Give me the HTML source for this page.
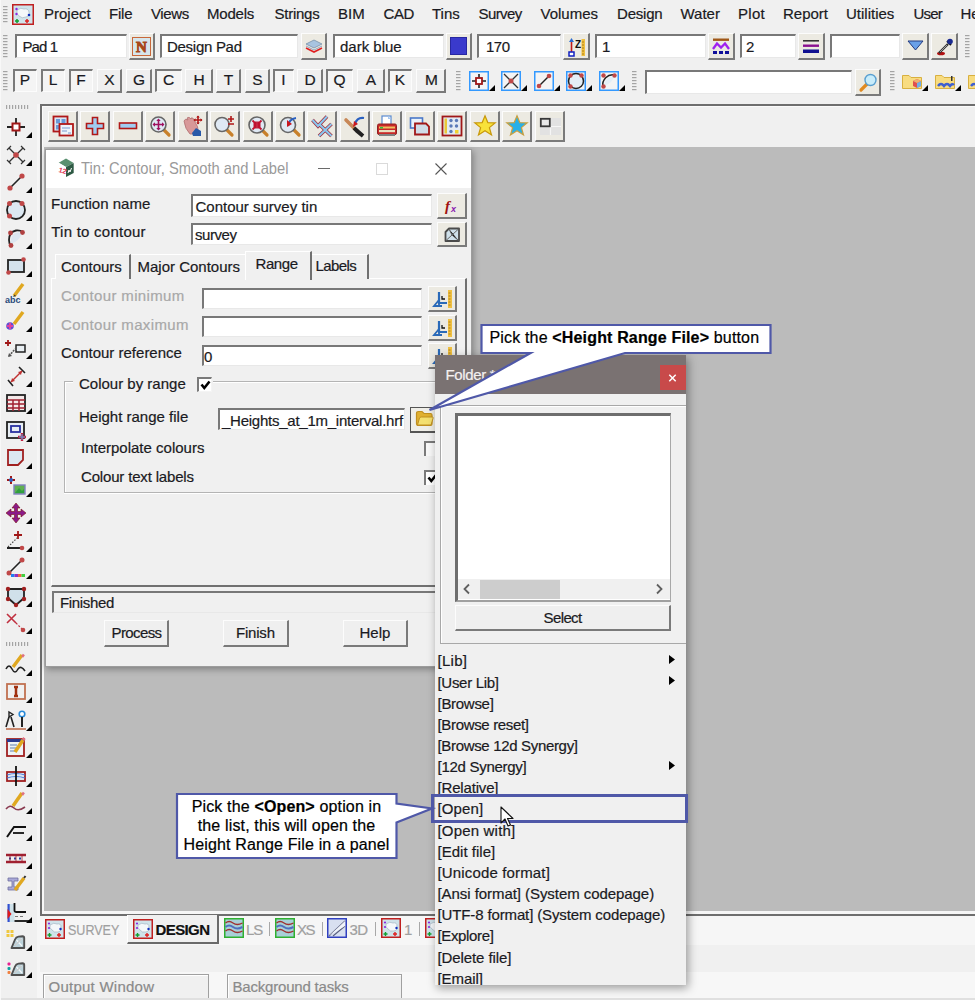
<!DOCTYPE html><html><head><meta charset="utf-8"><style>
html,body{margin:0;padding:0;}
body{width:975px;height:1000px;overflow:hidden;position:relative;background:#f0f0f0;font-family:"Liberation Sans",sans-serif;}
.t{position:absolute;white-space:nowrap;line-height:1;-webkit-text-stroke:0.2px currentColor;}
.b{position:absolute;}
svg.b{overflow:visible}
</style></head><body>
<div class="b" style="left:40px;top:104px;width:935px;height:812px;background:#6e6e6e"></div>
<div class="b" style="left:42px;top:106px;width:933px;height:807.5px;background:#f6f6f6"></div>
<div class="b" style="left:43.5px;top:107px;width:931.5px;height:804px;background:#bbbbbb"></div>
<div class="b" style="left:42px;top:106px;width:933px;height:41px;background:#f0f0f0;border-top:1px solid #fafafa;border-left:1px solid #fafafa;box-sizing:border-box"></div>
<div class="b" style="left:37px;top:104px;width:3px;height:896px;background:#f6f6f6"></div>
<div class="b" style="left:37px;top:916px;width:938px;height:28.5px;background:#f6f6f6"></div>
<div class="b" style="left:0px;top:944.5px;width:975px;height:55.5px;background:#f0f0f0"></div>
<div class="b" style="left:37px;top:971.5px;width:938px;height:28.5px;background:#f7f7f7"></div>
<div class="b" style="left:37px;top:916px;width:3px;height:84px;background:#f6f6f6"></div>
<svg class="b" style="left:45px;top:919px" width="20" height="20" viewBox="0 0 20 20"><rect x="0.75" y="0.75" width="18.5" height="18.5" fill="#cfe3ea" stroke="#c02020" stroke-width="1.5"/><path d="M5 6 Q9 3 12 5 Q16 4 16 8 Q17 12 13 13 Q9 14 7 11 Q4 9 5 6Z" fill="#f4f8fa" stroke="#9ab" stroke-width="0.6"/><circle cx="4" cy="4.5" r="1.1" fill="#8a2be2"/><circle cx="4" cy="9" r="1.1" fill="#8a2be2"/><circle cx="15.5" cy="10" r="1.2" fill="#1030c0"/><path d="M4.5 14v4M2.5 16h4" stroke="#10a030" stroke-width="1.4"/><path d="M14 14v4M12 16h4" stroke="#e02020" stroke-width="1.4"/></svg>
<span class="t" style="left:68.0px;top:922.3px;font-size:15px;color:#a0a0a0;font-weight:normal;transform:scaleX(0.835);transform-origin:0 0">SURVEY</span>
<div class="b" style="left:127px;top:915px;width:92px;height:29px;background:#f0f0f0;border-left:1px solid #fff;border-right:2px solid #6a6a6a;border-bottom:2px solid #6a6a6a;box-sizing:border-box"></div>
<svg class="b" style="left:133px;top:919px" width="20" height="20" viewBox="0 0 20 20"><rect x="0.75" y="0.75" width="18.5" height="18.5" fill="#cfe3ea" stroke="#c02020" stroke-width="1.5"/><path d="M5 6 Q9 3 12 5 Q16 4 16 8 Q17 12 13 13 Q9 14 7 11 Q4 9 5 6Z" fill="#f4f8fa" stroke="#9ab" stroke-width="0.6"/><circle cx="4" cy="4.5" r="1.1" fill="#8a2be2"/><circle cx="4" cy="9" r="1.1" fill="#8a2be2"/><circle cx="15.5" cy="10" r="1.2" fill="#1030c0"/><path d="M4.5 14v4M2.5 16h4" stroke="#10a030" stroke-width="1.4"/><path d="M14 14v4M12 16h4" stroke="#e02020" stroke-width="1.4"/></svg>
<span class="t" style="left:155.5px;top:922.3px;font-size:15px;color:#111;font-weight:bold;letter-spacing:-0.6px">DESIGN</span>
<svg class="b" style="left:224px;top:918px" width="20" height="20" viewBox="0 0 20 20"><rect x="0.75" y="0.75" width="18.5" height="18.5" fill="#a8d0d8" stroke="#30b030" stroke-width="1.5"/><path d="M1.5 5 Q5 2 9 5 T18.5 5" stroke="#a03030" stroke-width="1.3" fill="none"/><path d="M1.5 9 Q5 6 9 9 T18.5 9" stroke="#5070c0" stroke-width="2" fill="none"/><path d="M1.5 13 Q5 10 9 13 T18.5 13" stroke="#a03030" stroke-width="1.3" fill="none"/></svg>
<span class="t" style="left:246.0px;top:922.3px;font-size:15px;color:#a0a0a0;font-weight:normal;letter-spacing:-1.2px">LS</span>
<div class="b" style="left:269px;top:922px;width:1px;height:14px;background:#a8a8a8"></div>
<svg class="b" style="left:275px;top:918px" width="20" height="20" viewBox="0 0 20 20"><rect x="0.75" y="0.75" width="18.5" height="18.5" fill="#a8d0d8" stroke="#30b030" stroke-width="1.5"/><path d="M1.5 5 Q5 2 9 5 T18.5 5" stroke="#a03030" stroke-width="1.3" fill="none"/><path d="M1.5 9 Q5 6 9 9 T18.5 9" stroke="#5070c0" stroke-width="2" fill="none"/><path d="M1.5 13 Q5 10 9 13 T18.5 13" stroke="#a03030" stroke-width="1.3" fill="none"/></svg>
<span class="t" style="left:297.0px;top:922.3px;font-size:15px;color:#a0a0a0;font-weight:normal;letter-spacing:-1.4px">XS</span>
<div class="b" style="left:322px;top:922px;width:1px;height:14px;background:#a8a8a8"></div>
<svg class="b" style="left:327px;top:918px" width="20" height="20" viewBox="0 0 20 20"><rect x="0.75" y="0.75" width="18.5" height="18.5" fill="#d8e0f0" stroke="#3040c0" stroke-width="1.5"/><path d="M2 18 L18 3 M6 18 L18 8" stroke="#5a6080" stroke-width="1.1"/><path d="M2 18 L18 3 L18 8Z" fill="#f0f4fa"/></svg>
<span class="t" style="left:349.5px;top:922.3px;font-size:15px;color:#a0a0a0;font-weight:normal;letter-spacing:-0.5px">3D</span>
<div class="b" style="left:375px;top:922px;width:1px;height:14px;background:#a8a8a8"></div>
<svg class="b" style="left:381px;top:918px" width="20" height="20" viewBox="0 0 20 20"><rect x="0.75" y="0.75" width="18.5" height="18.5" fill="#cfe3ea" stroke="#c02020" stroke-width="1.5"/><path d="M5 6 Q9 3 12 5 Q16 4 16 8 Q17 12 13 13 Q9 14 7 11 Q4 9 5 6Z" fill="#f4f8fa" stroke="#9ab" stroke-width="0.6"/><circle cx="4" cy="4.5" r="1.1" fill="#8a2be2"/><circle cx="4" cy="9" r="1.1" fill="#8a2be2"/><circle cx="15.5" cy="10" r="1.2" fill="#1030c0"/><path d="M4.5 14v4M2.5 16h4" stroke="#10a030" stroke-width="1.4"/><path d="M14 14v4M12 16h4" stroke="#e02020" stroke-width="1.4"/></svg>
<span class="t" style="left:404.0px;top:922.3px;font-size:15px;color:#a0a0a0;font-weight:normal;">1</span>
<div class="b" style="left:419px;top:922px;width:1px;height:14px;background:#a8a8a8"></div>
<svg class="b" style="left:425px;top:918px" width="20" height="20" viewBox="0 0 20 20"><rect x="0.75" y="0.75" width="18.5" height="18.5" fill="#cfe3ea" stroke="#c02020" stroke-width="1.5"/><path d="M5 6 Q9 3 12 5 Q16 4 16 8 Q17 12 13 13 Q9 14 7 11 Q4 9 5 6Z" fill="#f4f8fa" stroke="#9ab" stroke-width="0.6"/><circle cx="4" cy="4.5" r="1.1" fill="#8a2be2"/><circle cx="4" cy="9" r="1.1" fill="#8a2be2"/><circle cx="15.5" cy="10" r="1.2" fill="#1030c0"/><path d="M4.5 14v4M2.5 16h4" stroke="#10a030" stroke-width="1.4"/><path d="M14 14v4M12 16h4" stroke="#e02020" stroke-width="1.4"/></svg>
<div class="b" style="left:42.5px;top:974px;width:166.0px;height:26px;background:#f0f0f0;border-top:1px solid #a0a0a0;border-left:1px solid #a0a0a0;border-right:1px solid #a0a0a0;box-shadow:inset 1px 1px 0 #fff;box-sizing:border-box"></div>
<span class="t" style="left:48.5px;top:979.3px;font-size:15px;color:#8a8a8a;font-weight:normal;letter-spacing:0.25px">Output Window</span>
<div class="b" style="left:226.5px;top:974px;width:175.5px;height:26px;background:#f0f0f0;border-top:1px solid #a0a0a0;border-left:1px solid #a0a0a0;border-right:1px solid #a0a0a0;box-shadow:inset 1px 1px 0 #fff;box-sizing:border-box"></div>
<span class="t" style="left:232.5px;top:979.3px;font-size:15px;color:#8a8a8a;font-weight:normal;letter-spacing:-0.2px">Background tasks</span>
<div class="b" style="left:0px;top:998px;width:975px;height:2px;background:#e0e0e0"></div>
<svg class="b" style="left:2.5px;top:6px" width="4" height="16" viewBox="0 0 4 16"><rect x="0" y="0" width="4.5" height="1.2" fill="#a4a4a4"/><rect x="0" y="3" width="4.5" height="1.2" fill="#a4a4a4"/><rect x="0" y="6" width="4.5" height="1.2" fill="#a4a4a4"/><rect x="0" y="9" width="4.5" height="1.2" fill="#a4a4a4"/><rect x="0" y="12" width="4.5" height="1.2" fill="#a4a4a4"/><rect x="0" y="15" width="4.5" height="1.2" fill="#a4a4a4"/></svg>
<svg class="b" style="left:12px;top:4px" width="22" height="21" viewBox="0 0 22 21"><rect x="0.75" y="0.75" width="20.5" height="19.5" fill="#cfe3ea" stroke="#c02020" stroke-width="1.5"/><path d="M5 6 Q9 3 12 5 Q16 4 17 8 Q18 12 14 13 Q10 15 7 12 Q4 10 5 6Z" fill="#f4f8fa" stroke="#9ab" stroke-width="0.6"/><circle cx="4.5" cy="5" r="1.2" fill="#8a2be2"/><circle cx="4.5" cy="10" r="1.2" fill="#8a2be2"/><circle cx="17" cy="11" r="1.3" fill="#1030c0"/><path d="M5 15v4M3 17h4" stroke="#10a030" stroke-width="1.5"/><path d="M15 15v4M13 17h4" stroke="#e02020" stroke-width="1.5"/></svg>
<span class="t" style="left:44.0px;top:6.3px;font-size:15px;color:#1a1a22;font-weight:normal;letter-spacing:0px">Project</span>
<span class="t" style="left:109.0px;top:6.3px;font-size:15px;color:#1a1a22;font-weight:normal;letter-spacing:-0.2px">File</span>
<span class="t" style="left:151.0px;top:6.3px;font-size:15px;color:#1a1a22;font-weight:normal;letter-spacing:-0.4px">Views</span>
<span class="t" style="left:207.0px;top:6.3px;font-size:15px;color:#1a1a22;font-weight:normal;letter-spacing:-0.2px">Models</span>
<span class="t" style="left:274.5px;top:6.3px;font-size:15px;color:#1a1a22;font-weight:normal;letter-spacing:-0.25px">Strings</span>
<span class="t" style="left:338.0px;top:6.3px;font-size:15px;color:#1a1a22;font-weight:normal;letter-spacing:0px">BIM</span>
<span class="t" style="left:383.5px;top:6.3px;font-size:15px;color:#1a1a22;font-weight:normal;letter-spacing:-0.4px">CAD</span>
<span class="t" style="left:432.0px;top:6.3px;font-size:15px;color:#1a1a22;font-weight:normal;letter-spacing:0px">Tins</span>
<span class="t" style="left:478.5px;top:6.3px;font-size:15px;color:#1a1a22;font-weight:normal;letter-spacing:-0.6px">Survey</span>
<span class="t" style="left:540.5px;top:6.3px;font-size:15px;color:#1a1a22;font-weight:normal;letter-spacing:0px">Volumes</span>
<span class="t" style="left:617.0px;top:6.3px;font-size:15px;color:#1a1a22;font-weight:normal;letter-spacing:-0.2px">Design</span>
<span class="t" style="left:680.5px;top:6.3px;font-size:15px;color:#1a1a22;font-weight:normal;letter-spacing:0px">Water</span>
<span class="t" style="left:738.0px;top:6.3px;font-size:15px;color:#1a1a22;font-weight:normal;letter-spacing:0.3px">Plot</span>
<span class="t" style="left:783.0px;top:6.3px;font-size:15px;color:#1a1a22;font-weight:normal;letter-spacing:0px">Report</span>
<span class="t" style="left:846.0px;top:6.3px;font-size:15px;color:#1a1a22;font-weight:normal;letter-spacing:0px">Utilities</span>
<span class="t" style="left:913.5px;top:6.3px;font-size:15px;color:#1a1a22;font-weight:normal;letter-spacing:-0.8px">User</span>
<span class="t" style="left:960.5px;top:6.3px;font-size:15px;color:#1a1a22;font-weight:normal;letter-spacing:0px">Help</span>
<svg class="b" style="left:2.5px;top:35px" width="4" height="24" viewBox="0 0 4 24"><rect x="0" y="0" width="4.5" height="1.2" fill="#a4a4a4"/><rect x="0" y="3" width="4.5" height="1.2" fill="#a4a4a4"/><rect x="0" y="6" width="4.5" height="1.2" fill="#a4a4a4"/><rect x="0" y="9" width="4.5" height="1.2" fill="#a4a4a4"/><rect x="0" y="12" width="4.5" height="1.2" fill="#a4a4a4"/><rect x="0" y="15" width="4.5" height="1.2" fill="#a4a4a4"/><rect x="0" y="18" width="4.5" height="1.2" fill="#a4a4a4"/><rect x="0" y="21" width="4.5" height="1.2" fill="#a4a4a4"/></svg>
<div class="b" style="left:15px;top:34px;width:112px;height:24px;background:#fff;border-top:2px solid #787878;border-left:2px solid #787878;border-right:1px solid #e8e8e8;border-bottom:1px solid #e8e8e8;box-sizing:border-box"></div>
<div class="b" style="left:129px;top:33px;width:26px;height:27px;background:#eceae2;border-top:1px solid #fcfcfc;border-left:1px solid #fcfcfc;border-right:2px solid #7a7a7a;border-bottom:2px solid #7a7a7a;box-sizing:border-box"></div>
<div class="b" style="left:160px;top:34px;width:138px;height:24px;background:#fff;border-top:2px solid #787878;border-left:2px solid #787878;border-right:1px solid #e8e8e8;border-bottom:1px solid #e8e8e8;box-sizing:border-box"></div>
<div class="b" style="left:301px;top:33px;width:26px;height:27px;background:#eceae2;border-top:1px solid #fcfcfc;border-left:1px solid #fcfcfc;border-right:2px solid #7a7a7a;border-bottom:2px solid #7a7a7a;box-sizing:border-box"></div>
<div class="b" style="left:333px;top:34px;width:111px;height:24px;background:#fff;border-top:2px solid #787878;border-left:2px solid #787878;border-right:1px solid #e8e8e8;border-bottom:1px solid #e8e8e8;box-sizing:border-box"></div>
<div class="b" style="left:446px;top:33px;width:26px;height:27px;background:#eceae2;border-top:1px solid #fcfcfc;border-left:1px solid #fcfcfc;border-right:2px solid #7a7a7a;border-bottom:2px solid #7a7a7a;box-sizing:border-box"></div>
<div class="b" style="left:477px;top:34px;width:84px;height:24px;background:#fff;border-top:2px solid #787878;border-left:2px solid #787878;border-right:1px solid #e8e8e8;border-bottom:1px solid #e8e8e8;box-sizing:border-box"></div>
<div class="b" style="left:563px;top:33px;width:27px;height:27px;background:#eceae2;border-top:1px solid #fcfcfc;border-left:1px solid #fcfcfc;border-right:2px solid #7a7a7a;border-bottom:2px solid #7a7a7a;box-sizing:border-box"></div>
<div class="b" style="left:595px;top:34px;width:111px;height:24px;background:#fff;border-top:2px solid #787878;border-left:2px solid #787878;border-right:1px solid #e8e8e8;border-bottom:1px solid #e8e8e8;box-sizing:border-box"></div>
<div class="b" style="left:708px;top:33px;width:27px;height:27px;background:#eceae2;border-top:1px solid #fcfcfc;border-left:1px solid #fcfcfc;border-right:2px solid #7a7a7a;border-bottom:2px solid #7a7a7a;box-sizing:border-box"></div>
<div class="b" style="left:740px;top:34px;width:56px;height:24px;background:#fff;border-top:2px solid #787878;border-left:2px solid #787878;border-right:1px solid #e8e8e8;border-bottom:1px solid #e8e8e8;box-sizing:border-box"></div>
<div class="b" style="left:798px;top:33px;width:27px;height:27px;background:#eceae2;border-top:1px solid #fcfcfc;border-left:1px solid #fcfcfc;border-right:2px solid #7a7a7a;border-bottom:2px solid #7a7a7a;box-sizing:border-box"></div>
<div class="b" style="left:830px;top:34px;width:70px;height:24px;background:#fff;border-top:2px solid #787878;border-left:2px solid #787878;border-right:1px solid #e8e8e8;border-bottom:1px solid #e8e8e8;box-sizing:border-box"></div>
<div class="b" style="left:902px;top:33px;width:27px;height:27px;background:#eceae2;border-top:1px solid #fcfcfc;border-left:1px solid #fcfcfc;border-right:2px solid #7a7a7a;border-bottom:2px solid #7a7a7a;box-sizing:border-box"></div>
<div class="b" style="left:931px;top:33px;width:27px;height:27px;background:#eceae2;border-top:1px solid #fcfcfc;border-left:1px solid #fcfcfc;border-right:2px solid #7a7a7a;border-bottom:2px solid #7a7a7a;box-sizing:border-box"></div>
<svg class="b" style="left:965px;top:35px" width="4" height="23" viewBox="0 0 4 23"><rect x="0" y="0" width="4.5" height="1.2" fill="#a4a4a4"/><rect x="0" y="3" width="4.5" height="1.2" fill="#a4a4a4"/><rect x="0" y="6" width="4.5" height="1.2" fill="#a4a4a4"/><rect x="0" y="9" width="4.5" height="1.2" fill="#a4a4a4"/><rect x="0" y="12" width="4.5" height="1.2" fill="#a4a4a4"/><rect x="0" y="15" width="4.5" height="1.2" fill="#a4a4a4"/><rect x="0" y="18" width="4.5" height="1.2" fill="#a4a4a4"/><rect x="0" y="21" width="4.5" height="1.2" fill="#a4a4a4"/></svg>
<span class="t" style="left:22.5px;top:38.8px;font-size:15px;color:#1a1a22;font-weight:normal;letter-spacing:-0.9px">Pad 1</span>
<span class="t" style="left:167.0px;top:38.8px;font-size:15px;color:#1a1a22;font-weight:normal;letter-spacing:-0.28px">Design Pad</span>
<span class="t" style="left:340.0px;top:38.8px;font-size:15px;color:#1a1a22;font-weight:normal;letter-spacing:0px">dark blue</span>
<span class="t" style="left:486.0px;top:38.8px;font-size:15px;color:#1a1a22;font-weight:normal;letter-spacing:-0.5px">170</span>
<span class="t" style="left:602.0px;top:38.8px;font-size:15px;color:#1a1a22;font-weight:normal;letter-spacing:0px">1</span>
<span class="t" style="left:746.0px;top:38.8px;font-size:15px;color:#1a1a22;font-weight:normal;letter-spacing:0px">2</span>
<svg class="b" style="left:132px;top:37px" width="19" height="19" viewBox="0 0 19 19"><rect x="0.5" y="0.5" width="18" height="18" fill="#d6e6ec" stroke="#c8683a"/><text x="9.5" y="15" text-anchor="middle" font-family="Liberation Serif" font-weight="bold" font-size="15" fill="#a84818" stroke="#a84818" stroke-width="0.9">N</text></svg>
<svg class="b" style="left:305px;top:38px" width="18" height="16" viewBox="0 0 18 16"><path d="M1 10 L9 14 L17 10" stroke="#e02020" stroke-width="1.6" fill="none"/><path d="M1 6 L9 2 L17 6 L9 10 Z" fill="#a8c4e0" stroke="#7890a8" stroke-width="0.8"/><path d="M1 8 L9 12 L17 8" stroke="#90a8c0" stroke-width="1" fill="none"/></svg>
<div class="b" style="left:450px;top:37px;width:17px;height:18px;background:#3a3acc;border:1px solid #2828a0;box-sizing:border-box"></div>
<svg class="b" style="left:567px;top:37px" width="19" height="20" viewBox="0 0 19 20"><path d="M4.5 3 V16" stroke="#c01818" stroke-width="1.6"/><path d="M4.5 1 L2 5 H7 Z" fill="#2a6ad0"/><rect x="2" y="15" width="5" height="4" fill="#fff" stroke="#1020c0" stroke-width="1.5"/><text x="8" y="11" font-family="Liberation Sans" font-weight="bold" font-size="10" fill="#111">Z</text><rect x="14.5" y="2" width="3.5" height="17" fill="#f0c040"/><path d="M15 5h2M15 8h2M15 11h2M15 14h2M15 17h2" stroke="#a07010" stroke-width="0.8"/></svg>
<svg class="b" style="left:712px;top:38px" width="18" height="16" viewBox="0 0 18 16"><rect x="1" y="0.5" width="16" height="2.4" fill="#a05818"/><path d="M1 11 L5 5.5 L9 9.5 L13 5.5 L17 11" stroke="#a020f0" stroke-width="2.3" fill="none"/><path d="M1 14.5h4M7 14.5h4M13 14.5h4" stroke="#10109a" stroke-width="2.8"/></svg>
<svg class="b" style="left:802px;top:39px" width="18" height="15" viewBox="0 0 18 15"><rect x="1" y="1" width="16" height="1.6" fill="#333"/><rect x="1" y="5.5" width="16" height="2.4" fill="#8a1090"/><rect x="1" y="10.5" width="16" height="3.5" fill="#101090"/></svg>
<svg class="b" style="left:907px;top:40px" width="17" height="12" viewBox="0 0 17 12"><path d="M1 1 H16 L8.5 10 Z" fill="#6aa0e8" stroke="#223a80" stroke-width="1"/></svg>
<svg class="b" style="left:935px;top:37px" width="19" height="20" viewBox="0 0 19 20"><ellipse cx="6" cy="16.5" rx="4" ry="1.8" fill="#b01010"/><path d="M4 16 L13 7" stroke="#333" stroke-width="2.4"/><path d="M5 15 L12 8" stroke="#bbb" stroke-width="0.8"/><path d="M12 4 L16 8" stroke="#111" stroke-width="2"/><circle cx="15" cy="4.5" r="2.8" fill="#1a2a90"/></svg>
<svg class="b" style="left:2.5px;top:71px" width="4" height="19" viewBox="0 0 4 19"><rect x="0" y="0" width="4.5" height="1.2" fill="#a4a4a4"/><rect x="0" y="3" width="4.5" height="1.2" fill="#a4a4a4"/><rect x="0" y="6" width="4.5" height="1.2" fill="#a4a4a4"/><rect x="0" y="9" width="4.5" height="1.2" fill="#a4a4a4"/><rect x="0" y="12" width="4.5" height="1.2" fill="#a4a4a4"/><rect x="0" y="15" width="4.5" height="1.2" fill="#a4a4a4"/><rect x="0" y="18" width="4.5" height="1.2" fill="#a4a4a4"/></svg>
<div class="b" style="left:13px;top:69px;width:24px;height:23px;background:#f4f4f4;border-top:2px solid #7a7a7a;border-left:2px solid #7a7a7a;border-right:1px solid #fcfcfc;border-bottom:1px solid #fcfcfc;box-sizing:border-box"></div>
<span class="t" style="left:19.0px;top:72.1px;font-size:15.5px;color:#1a1a22;font-weight:normal;width:12px;text-align:center">P</span>
<div class="b" style="left:41px;top:69px;width:24px;height:23px;background:#f4f4f4;border-top:2px solid #7a7a7a;border-left:2px solid #7a7a7a;border-right:1px solid #fcfcfc;border-bottom:1px solid #fcfcfc;box-sizing:border-box"></div>
<span class="t" style="left:47.0px;top:72.1px;font-size:15.5px;color:#1a1a22;font-weight:normal;width:12px;text-align:center">L</span>
<div class="b" style="left:69px;top:69px;width:24px;height:23px;background:#f4f4f4;border-top:2px solid #7a7a7a;border-left:2px solid #7a7a7a;border-right:1px solid #fcfcfc;border-bottom:1px solid #fcfcfc;box-sizing:border-box"></div>
<span class="t" style="left:75.0px;top:72.1px;font-size:15.5px;color:#1a1a22;font-weight:normal;width:12px;text-align:center">F</span>
<div class="b" style="left:97px;top:69px;width:25px;height:24px;background:#efefef;border-top:1px solid #fcfcfc;border-left:1px solid #fcfcfc;border-right:2px solid #7a7a7a;border-bottom:2px solid #7a7a7a;box-sizing:border-box"></div>
<span class="t" style="left:103.5px;top:72.1px;font-size:15.5px;color:#1a1a22;font-weight:normal;width:12px;text-align:center">X</span>
<div class="b" style="left:126px;top:69px;width:26px;height:24px;background:#efefef;border-top:1px solid #fcfcfc;border-left:1px solid #fcfcfc;border-right:2px solid #7a7a7a;border-bottom:2px solid #7a7a7a;box-sizing:border-box"></div>
<span class="t" style="left:133.0px;top:72.1px;font-size:15.5px;color:#1a1a22;font-weight:normal;width:12px;text-align:center">G</span>
<div class="b" style="left:155px;top:69px;width:27px;height:23px;background:#f4f4f4;border-top:2px solid #7a7a7a;border-left:2px solid #7a7a7a;border-right:1px solid #fcfcfc;border-bottom:1px solid #fcfcfc;box-sizing:border-box"></div>
<span class="t" style="left:162.5px;top:72.1px;font-size:15.5px;color:#1a1a22;font-weight:normal;width:12px;text-align:center">C</span>
<div class="b" style="left:185px;top:69px;width:28px;height:24px;background:#efefef;border-top:1px solid #fcfcfc;border-left:1px solid #fcfcfc;border-right:2px solid #7a7a7a;border-bottom:2px solid #7a7a7a;box-sizing:border-box"></div>
<span class="t" style="left:193.0px;top:72.1px;font-size:15.5px;color:#1a1a22;font-weight:normal;width:12px;text-align:center">H</span>
<div class="b" style="left:216px;top:69px;width:25px;height:24px;background:#efefef;border-top:1px solid #fcfcfc;border-left:1px solid #fcfcfc;border-right:2px solid #7a7a7a;border-bottom:2px solid #7a7a7a;box-sizing:border-box"></div>
<span class="t" style="left:222.5px;top:72.1px;font-size:15.5px;color:#1a1a22;font-weight:normal;width:12px;text-align:center">T</span>
<div class="b" style="left:245px;top:69px;width:25px;height:24px;background:#efefef;border-top:1px solid #fcfcfc;border-left:1px solid #fcfcfc;border-right:2px solid #7a7a7a;border-bottom:2px solid #7a7a7a;box-sizing:border-box"></div>
<span class="t" style="left:251.5px;top:72.1px;font-size:15.5px;color:#1a1a22;font-weight:normal;width:12px;text-align:center">S</span>
<div class="b" style="left:273px;top:69px;width:21px;height:23px;background:#f4f4f4;border-top:2px solid #7a7a7a;border-left:2px solid #7a7a7a;border-right:1px solid #fcfcfc;border-bottom:1px solid #fcfcfc;box-sizing:border-box"></div>
<span class="t" style="left:277.5px;top:72.1px;font-size:15.5px;color:#1a1a22;font-weight:normal;width:12px;text-align:center">I</span>
<div class="b" style="left:297px;top:69px;width:26px;height:24px;background:#efefef;border-top:1px solid #fcfcfc;border-left:1px solid #fcfcfc;border-right:2px solid #7a7a7a;border-bottom:2px solid #7a7a7a;box-sizing:border-box"></div>
<span class="t" style="left:304.0px;top:72.1px;font-size:15.5px;color:#1a1a22;font-weight:normal;width:12px;text-align:center">D</span>
<div class="b" style="left:326px;top:69px;width:27px;height:23px;background:#f4f4f4;border-top:2px solid #7a7a7a;border-left:2px solid #7a7a7a;border-right:1px solid #fcfcfc;border-bottom:1px solid #fcfcfc;box-sizing:border-box"></div>
<span class="t" style="left:333.5px;top:72.1px;font-size:15.5px;color:#1a1a22;font-weight:normal;width:12px;text-align:center">Q</span>
<div class="b" style="left:357px;top:69px;width:28px;height:24px;background:#efefef;border-top:1px solid #fcfcfc;border-left:1px solid #fcfcfc;border-right:2px solid #7a7a7a;border-bottom:2px solid #7a7a7a;box-sizing:border-box"></div>
<span class="t" style="left:365.0px;top:72.1px;font-size:15.5px;color:#1a1a22;font-weight:normal;width:12px;text-align:center">A</span>
<div class="b" style="left:388px;top:69px;width:24px;height:23px;background:#f4f4f4;border-top:2px solid #7a7a7a;border-left:2px solid #7a7a7a;border-right:1px solid #fcfcfc;border-bottom:1px solid #fcfcfc;box-sizing:border-box"></div>
<span class="t" style="left:394.0px;top:72.1px;font-size:15.5px;color:#1a1a22;font-weight:normal;width:12px;text-align:center">K</span>
<div class="b" style="left:416px;top:69px;width:30px;height:24px;background:#efefef;border-top:1px solid #fcfcfc;border-left:1px solid #fcfcfc;border-right:2px solid #7a7a7a;border-bottom:2px solid #7a7a7a;box-sizing:border-box"></div>
<span class="t" style="left:425.0px;top:72.1px;font-size:15.5px;color:#1a1a22;font-weight:normal;width:12px;text-align:center">M</span>
<svg class="b" style="left:456px;top:71px" width="4" height="19" viewBox="0 0 4 19"><rect x="0" y="0" width="4.5" height="1.2" fill="#a4a4a4"/><rect x="0" y="3" width="4.5" height="1.2" fill="#a4a4a4"/><rect x="0" y="6" width="4.5" height="1.2" fill="#a4a4a4"/><rect x="0" y="9" width="4.5" height="1.2" fill="#a4a4a4"/><rect x="0" y="12" width="4.5" height="1.2" fill="#a4a4a4"/><rect x="0" y="15" width="4.5" height="1.2" fill="#a4a4a4"/><rect x="0" y="18" width="4.5" height="1.2" fill="#a4a4a4"/></svg>
<svg class="b" style="left:469px;top:71px" width="20" height="20" viewBox="0 0 20 20"><rect x="0.75" y="0.75" width="18.5" height="18.5" fill="#f4f4f4" stroke="#3399ff" stroke-width="1.5"/><path d="M10 3V17M3 10H17" stroke="#222" stroke-width="1.6"/><rect x="7" y="7" width="6" height="6" fill="#fff" stroke="#a01818" stroke-width="1.8"/></svg>
<svg class="b" style="left:489px;top:85px" width="6" height="6" viewBox="0 0 6 6"><path d="M6 0 L6 6 L0 6 Z" fill="#000"/></svg>
<svg class="b" style="left:501px;top:71px" width="20" height="20" viewBox="0 0 20 20"><rect x="0.75" y="0.75" width="18.5" height="18.5" fill="#f4f4f4" stroke="#3399ff" stroke-width="1.5"/><path d="M3 3L17 17M17 3L3 17" stroke="#333" stroke-width="1.3"/><circle cx="10" cy="10" r="2.5" fill="#c04848"/></svg>
<svg class="b" style="left:521px;top:85px" width="6" height="6" viewBox="0 0 6 6"><path d="M6 0 L6 6 L0 6 Z" fill="#000"/></svg>
<svg class="b" style="left:534px;top:71px" width="20" height="20" viewBox="0 0 20 20"><rect x="0.75" y="0.75" width="18.5" height="18.5" fill="#f4f4f4" stroke="#3399ff" stroke-width="1.5"/><path d="M5 15L15 5" stroke="#222" stroke-width="1.5"/><circle cx="5" cy="15" r="2.3" fill="#c04848"/><circle cx="15" cy="5" r="2.3" fill="#c04848"/></svg>
<svg class="b" style="left:554px;top:85px" width="6" height="6" viewBox="0 0 6 6"><path d="M6 0 L6 6 L0 6 Z" fill="#000"/></svg>
<svg class="b" style="left:566px;top:71px" width="20" height="20" viewBox="0 0 20 20"><rect x="0.75" y="0.75" width="18.5" height="18.5" fill="#f4f4f4" stroke="#3399ff" stroke-width="1.5"/><circle cx="10" cy="10" r="7.5" fill="#e4eef6" stroke="#222" stroke-width="1.5"/><circle cx="4.5" cy="4.5" r="2.2" fill="#c04848"/><circle cx="15.5" cy="4.5" r="2.2" fill="#c04848"/><circle cx="4.5" cy="15.5" r="2.2" fill="#c04848"/></svg>
<svg class="b" style="left:586px;top:85px" width="6" height="6" viewBox="0 0 6 6"><path d="M6 0 L6 6 L0 6 Z" fill="#000"/></svg>
<svg class="b" style="left:599px;top:71px" width="20" height="20" viewBox="0 0 20 20"><rect x="0.75" y="0.75" width="18.5" height="18.5" fill="#f4f4f4" stroke="#3399ff" stroke-width="1.5"/><path d="M4 16 A10 10 0 0 1 16 4" fill="none" stroke="#222" stroke-width="1.5"/><path d="M5 15 Q6 6 15 5 Q14 12 5 15Z" fill="#e4eef6"/><circle cx="4.5" cy="4.5" r="2.2" fill="#c04848"/><circle cx="15.5" cy="4.5" r="2.2" fill="#c04848"/><circle cx="4.5" cy="15.5" r="2.2" fill="#c04848"/></svg>
<svg class="b" style="left:619px;top:85px" width="6" height="6" viewBox="0 0 6 6"><path d="M6 0 L6 6 L0 6 Z" fill="#000"/></svg>
<svg class="b" style="left:632px;top:71px" width="4" height="19" viewBox="0 0 4 19"><rect x="0" y="0" width="4.5" height="1.2" fill="#a4a4a4"/><rect x="0" y="3" width="4.5" height="1.2" fill="#a4a4a4"/><rect x="0" y="6" width="4.5" height="1.2" fill="#a4a4a4"/><rect x="0" y="9" width="4.5" height="1.2" fill="#a4a4a4"/><rect x="0" y="12" width="4.5" height="1.2" fill="#a4a4a4"/><rect x="0" y="15" width="4.5" height="1.2" fill="#a4a4a4"/><rect x="0" y="18" width="4.5" height="1.2" fill="#a4a4a4"/></svg>
<div class="b" style="left:645px;top:70px;width:207px;height:24px;background:#fff;border-top:2px solid #787878;border-left:2px solid #787878;border-right:1px solid #e8e8e8;border-bottom:1px solid #e8e8e8;box-sizing:border-box"></div>
<div class="b" style="left:855px;top:69px;width:26px;height:27px;background:#eceae2;border-top:1px solid #fcfcfc;border-left:1px solid #fcfcfc;border-right:2px solid #7a7a7a;border-bottom:2px solid #7a7a7a;box-sizing:border-box"></div>
<svg class="b" style="left:858px;top:72px" width="20" height="21" viewBox="0 0 20 21"><path d="M3 18 L9 12" stroke="#e08a20" stroke-width="3.2" stroke-linecap="round"/><circle cx="12.5" cy="8" r="5.5" fill="#c8ecfa" stroke="#5aa0d0" stroke-width="1.4"/></svg>
<svg class="b" style="left:890px;top:71px" width="4" height="19" viewBox="0 0 4 19"><rect x="0" y="0" width="4.5" height="1.2" fill="#a4a4a4"/><rect x="0" y="3" width="4.5" height="1.2" fill="#a4a4a4"/><rect x="0" y="6" width="4.5" height="1.2" fill="#a4a4a4"/><rect x="0" y="9" width="4.5" height="1.2" fill="#a4a4a4"/><rect x="0" y="12" width="4.5" height="1.2" fill="#a4a4a4"/><rect x="0" y="15" width="4.5" height="1.2" fill="#a4a4a4"/><rect x="0" y="18" width="4.5" height="1.2" fill="#a4a4a4"/></svg>
<svg class="b" style="left:902px;top:73px" width="21" height="17" viewBox="0 0 21 17"><path d="M0.5 2.5 H7 L9 4.5 H19.5 V15.5 H0.5 Z" fill="#f8dc80" stroke="#d8b040" stroke-width="1"/><path d="M11 8 L15 6 L19 8 V13 L15 15 L11 13Z" fill="#e05050"/><path d="M15 10 L19 8 V13 L15 15Z" fill="#70b0e8"/><path d="M11 8 L15 6 L19 8 L15 10Z" fill="#f0b070"/></svg>
<svg class="b" style="left:922px;top:85px" width="6" height="6" viewBox="0 0 6 6"><path d="M6 0 L6 6 L0 6 Z" fill="#000"/></svg>
<svg class="b" style="left:935px;top:73px" width="21" height="17" viewBox="0 0 21 17"><path d="M0.5 2.5 H7 L9 4.5 H19.5 V15.5 H0.5 Z" fill="#f8dc80" stroke="#d8b040" stroke-width="1"/><path d="M3 13 Q6 9 9 13 Q12 9 15 13 Q17 10 19 12" stroke="#4060d0" stroke-width="2.4" fill="none"/><rect x="16" y="3" width="1.5" height="5" fill="#333"/></svg>
<svg class="b" style="left:955px;top:85px" width="6" height="6" viewBox="0 0 6 6"><path d="M6 0 L6 6 L0 6 Z" fill="#000"/></svg>
<svg class="b" style="left:968px;top:73px" width="21" height="17" viewBox="0 0 21 17"><path d="M0.5 2.5 H7 L9 4.5 H19.5 V15.5 H0.5 Z" fill="#f8dc80" stroke="#d8b040" stroke-width="1"/><path d="M3 13 Q6 9 9 13" stroke="#4060d0" stroke-width="2.4" fill="none"/></svg>
<div class="b" style="left:0px;top:0px;width:1px;height:1000px;background:#f8f8f8"></div>
<div class="b" style="left:48px;top:111px;width:30px;height:31px;background:#eceae2;border-top:1px solid #fcfcfc;border-left:1px solid #fcfcfc;border-right:2px solid #7a7a7a;border-bottom:2px solid #7a7a7a;box-sizing:border-box"></div>
<div class="b" style="left:80px;top:111px;width:30px;height:31px;background:#eceae2;border-top:1px solid #fcfcfc;border-left:1px solid #fcfcfc;border-right:2px solid #7a7a7a;border-bottom:2px solid #7a7a7a;box-sizing:border-box"></div>
<div class="b" style="left:113px;top:111px;width:30px;height:31px;background:#eceae2;border-top:1px solid #fcfcfc;border-left:1px solid #fcfcfc;border-right:2px solid #7a7a7a;border-bottom:2px solid #7a7a7a;box-sizing:border-box"></div>
<div class="b" style="left:145px;top:111px;width:30px;height:31px;background:#eceae2;border-top:1px solid #fcfcfc;border-left:1px solid #fcfcfc;border-right:2px solid #7a7a7a;border-bottom:2px solid #7a7a7a;box-sizing:border-box"></div>
<div class="b" style="left:178px;top:111px;width:30px;height:31px;background:#eceae2;border-top:1px solid #fcfcfc;border-left:1px solid #fcfcfc;border-right:2px solid #7a7a7a;border-bottom:2px solid #7a7a7a;box-sizing:border-box"></div>
<div class="b" style="left:210px;top:111px;width:30px;height:31px;background:#eceae2;border-top:1px solid #fcfcfc;border-left:1px solid #fcfcfc;border-right:2px solid #7a7a7a;border-bottom:2px solid #7a7a7a;box-sizing:border-box"></div>
<div class="b" style="left:243px;top:111px;width:30px;height:31px;background:#eceae2;border-top:1px solid #fcfcfc;border-left:1px solid #fcfcfc;border-right:2px solid #7a7a7a;border-bottom:2px solid #7a7a7a;box-sizing:border-box"></div>
<div class="b" style="left:275px;top:111px;width:30px;height:31px;background:#eceae2;border-top:1px solid #fcfcfc;border-left:1px solid #fcfcfc;border-right:2px solid #7a7a7a;border-bottom:2px solid #7a7a7a;box-sizing:border-box"></div>
<div class="b" style="left:307px;top:111px;width:30px;height:31px;background:#eceae2;border-top:1px solid #fcfcfc;border-left:1px solid #fcfcfc;border-right:2px solid #7a7a7a;border-bottom:2px solid #7a7a7a;box-sizing:border-box"></div>
<div class="b" style="left:340px;top:111px;width:30px;height:31px;background:#eceae2;border-top:1px solid #fcfcfc;border-left:1px solid #fcfcfc;border-right:2px solid #7a7a7a;border-bottom:2px solid #7a7a7a;box-sizing:border-box"></div>
<div class="b" style="left:372px;top:111px;width:30px;height:31px;background:#eceae2;border-top:1px solid #fcfcfc;border-left:1px solid #fcfcfc;border-right:2px solid #7a7a7a;border-bottom:2px solid #7a7a7a;box-sizing:border-box"></div>
<div class="b" style="left:405px;top:111px;width:30px;height:31px;background:#eceae2;border-top:1px solid #fcfcfc;border-left:1px solid #fcfcfc;border-right:2px solid #7a7a7a;border-bottom:2px solid #7a7a7a;box-sizing:border-box"></div>
<div class="b" style="left:437px;top:111px;width:30px;height:31px;background:#eceae2;border-top:1px solid #fcfcfc;border-left:1px solid #fcfcfc;border-right:2px solid #7a7a7a;border-bottom:2px solid #7a7a7a;box-sizing:border-box"></div>
<div class="b" style="left:470px;top:111px;width:30px;height:31px;background:#eceae2;border-top:1px solid #fcfcfc;border-left:1px solid #fcfcfc;border-right:2px solid #7a7a7a;border-bottom:2px solid #7a7a7a;box-sizing:border-box"></div>
<div class="b" style="left:502px;top:111px;width:30px;height:31px;background:#eceae2;border-top:1px solid #fcfcfc;border-left:1px solid #fcfcfc;border-right:2px solid #7a7a7a;border-bottom:2px solid #7a7a7a;box-sizing:border-box"></div>
<div class="b" style="left:535px;top:111px;width:30px;height:31px;background:#eceae2;border-top:1px solid #fcfcfc;border-left:1px solid #fcfcfc;border-right:2px solid #7a7a7a;border-bottom:2px solid #7a7a7a;box-sizing:border-box"></div>
<svg class="b" style="left:6px;top:105px" width="24" height="4" viewBox="0 0 24 4"><rect x="0" y="0" width="1.2" height="4" fill="#a4a4a4"/><rect x="3" y="0" width="1.2" height="4" fill="#a4a4a4"/><rect x="6" y="0" width="1.2" height="4" fill="#a4a4a4"/><rect x="9" y="0" width="1.2" height="4" fill="#a4a4a4"/><rect x="12" y="0" width="1.2" height="4" fill="#a4a4a4"/><rect x="15" y="0" width="1.2" height="4" fill="#a4a4a4"/><rect x="18" y="0" width="1.2" height="4" fill="#a4a4a4"/><rect x="21" y="0" width="1.2" height="4" fill="#a4a4a4"/></svg>
<svg class="b" style="left:52px;top:115px" width="22" height="22" viewBox="0 0 22 22"><rect x="1.5" y="1.5" width="14" height="15" fill="#dbe6f2" stroke="#b01818" stroke-width="1.8"/><rect x="4" y="4" width="4" height="4.5" fill="#6a9ad8"/><rect x="9.5" y="4" width="4" height="4.5" fill="#6a9ad8"/><rect x="4" y="10" width="4" height="4.5" fill="#6a9ad8"/><rect x="7.5" y="9" width="13.5" height="11.5" fill="#eef4fa" stroke="#b01818" stroke-width="1.8"/><path d="M10 13h8M10 16h5M16 18h3" stroke="#7a9ad0" stroke-width="1"/></svg>
<svg class="b" style="left:84px;top:115px" width="22" height="22" viewBox="0 0 22 22"><path d="M8.5 2.5 H13.5 V8.5 H19.5 V13.5 H13.5 V19.5 H8.5 V13.5 H2.5 V8.5 H8.5 Z" fill="#a0cdf2" stroke="#b01818" stroke-width="1.6"/></svg>
<svg class="b" style="left:117px;top:115px" width="22" height="22" viewBox="0 0 22 22"><rect x="2.5" y="8" width="17" height="5.5" fill="#a0cdf2" stroke="#b01818" stroke-width="1.6"/></svg>
<svg class="b" style="left:149px;top:115px" width="22" height="22" viewBox="0 0 22 22"><path d="M14 14 L20 20" stroke="#c8802a" stroke-width="3.2" stroke-linecap="round"/><circle cx="9.5" cy="9.5" r="7.5" fill="#dfe9f4" stroke="#666" stroke-width="1.6"/><path d="M9.5 4.5V14.5M4.5 9.5H14.5" stroke="#a01060" stroke-width="1.6"/><path d="M9.5 3.5l-2.2 2.5h4.4zM9.5 15.5l-2.2-2.5h4.4zM3.5 9.5l2.5-2.2v4.4zM15.5 9.5l-2.5-2.2v4.4z" fill="#a01060"/></svg>
<svg class="b" style="left:182px;top:115px" width="22" height="22" viewBox="0 0 22 22"><path d="M2 6 Q3 3 6 5 L5 3 Q7 1 9 4 L9 3 Q11 2 12 5 L14 9 Q16 11 16 15 L13 19 L8 19 Q3 14 2 6Z" fill="#d89898" stroke="#b07070" stroke-width="0.8"/><path d="M10 18 L14 13 L19 16 L19 21 L11 21Z" fill="#2858a8"/><path d="M16 1V9M12 5H20" stroke="#b01818" stroke-width="1.6"/><path d="M16 0.5l-1.8 2h3.6zM16 9.5l-1.8-2h3.6zM11.5 5l2-1.8v3.6zM20.5 5l-2-1.8v3.6z" fill="#b01818"/></svg>
<svg class="b" style="left:214px;top:115px" width="22" height="22" viewBox="0 0 22 22"><path d="M12 14 L18 20" stroke="#c8802a" stroke-width="3.2" stroke-linecap="round"/><circle cx="8" cy="9.5" r="7" fill="#dfe9f4" stroke="#666" stroke-width="1.6"/><path d="M17 1V7M14 4H20M14 9H20" stroke="#b01818" stroke-width="1.6"/></svg>
<svg class="b" style="left:247px;top:115px" width="22" height="22" viewBox="0 0 22 22"><path d="M15 15 L20 20" stroke="#c8802a" stroke-width="3.2" stroke-linecap="round"/><circle cx="10" cy="10" r="8" fill="#dfe9f4" stroke="#666" stroke-width="1.6"/><path d="M5.5 5.5 L9 9 V6.5 M9 9 H6.5 M14.5 5.5 L11 9 V6.5 M11 9 H13.5 M5.5 14.5 L9 11 V13.5 M9 11 H6.5 M14.5 14.5 L11 11 V13.5 M11 11 H13.5" stroke="#c01030" stroke-width="1.8" fill="none"/></svg>
<svg class="b" style="left:279px;top:115px" width="22" height="22" viewBox="0 0 22 22"><path d="M14 14 L20 20" stroke="#c8802a" stroke-width="3.2" stroke-linecap="round"/><circle cx="9" cy="10" r="7.5" fill="#dfe9f4" stroke="#666" stroke-width="1.6"/><path d="M9 11 Q10 4 17 3" stroke="#2a60c0" stroke-width="2" fill="none"/><path d="M8 12 L8 5 L13 9Z" fill="#c81820"/></svg>
<svg class="b" style="left:311px;top:115px" width="22" height="22" viewBox="0 0 22 22"><path d="M1.5 5 L7 11 L16 1.5 M8 9 L20.5 21 M20.5 9 L8 21" stroke="#a03040" stroke-width="3.6" fill="none"/><path d="M1.5 5 L7 11 L16 1.5 M8 9 L20.5 21 M20.5 9 L8 21" stroke="#8ac8f0" stroke-width="2" fill="none"/></svg>
<svg class="b" style="left:344px;top:115px" width="22" height="22" viewBox="0 0 22 22"><path d="M2 5 L11 14" stroke="#c88858" stroke-width="3.6" stroke-linecap="round"/><path d="M10 13 L19 21 L13 16Z" stroke="#222" stroke-width="3.8" fill="#222"/><path d="M20 3 Q13 2 11 9" stroke="#2a60c0" stroke-width="2.2" fill="none"/><path d="M9 12 L10 6 L14 9Z" fill="#c81820"/></svg>
<svg class="b" style="left:376px;top:115px" width="22" height="22" viewBox="0 0 22 22"><rect x="6" y="1" width="9" height="9" fill="#fff" stroke="#5a8ad0" stroke-width="1.2"/><path d="M12 1 L15 4 H12Z" fill="#a8c8f0"/><rect x="1.5" y="9" width="19" height="10.5" rx="1.5" fill="#c82828" stroke="#902020" stroke-width="1"/><rect x="3" y="11.5" width="16" height="2" fill="#f0c060"/><rect x="3" y="15" width="16" height="2.2" fill="#e8e0c0"/><rect x="4" y="12" width="3" height="1.5" fill="#30c040"/><rect x="3" y="19" width="16" height="2" fill="#808080"/></svg>
<svg class="b" style="left:409px;top:115px" width="22" height="22" viewBox="0 0 22 22"><rect x="1.5" y="3" width="12" height="10" fill="#eaf2fa" stroke="#4a78c8" stroke-width="1.6"/><path d="M6 8.5 H17 L20 11.5 V19.5 H6 Z" fill="#d0dde8" stroke="#a01818" stroke-width="1.8"/></svg>
<svg class="b" style="left:441px;top:115px" width="22" height="22" viewBox="0 0 22 22"><rect x="1.5" y="1.5" width="19" height="19" fill="#e4ebf3" stroke="#a01818" stroke-width="1.8"/><g fill="#5a7ab8"><circle cx="10" cy="5.5" r="1.7"/><circle cx="15.5" cy="5.5" r="1.7"/><circle cx="10" cy="11" r="1.7"/><circle cx="15.5" cy="11" r="1.7"/><circle cx="10" cy="16.5" r="1.7"/></g><rect x="3.5" y="3.5" width="2.5" height="15" fill="#e8c838"/><rect x="14" y="15" width="3.5" height="3.5" fill="#f0d030"/></svg>
<svg class="b" style="left:474px;top:115px" width="22" height="22" viewBox="0 0 22 22"><path d="M11 0.8 L13.8 7.6 L21.2 7.9 L15.4 12.6 L17.5 20 L11 15.8 L4.5 20 L6.6 12.6 L0.8 7.9 L8.2 7.6 Z" fill="#f8e23a" stroke="#c8980a" stroke-width="1.2"/></svg>
<svg class="b" style="left:506px;top:115px" width="22" height="22" viewBox="0 0 22 22"><path d="M11 0.8 L13.8 7.6 L21.2 7.9 L15.4 12.6 L17.5 20 L11 15.8 L4.5 20 L6.6 12.6 L0.8 7.9 L8.2 7.6 Z" fill="#28b0e8" stroke="#c8a040" stroke-width="1.2"/></svg>
<svg class="b" style="left:539px;top:115px" width="22" height="22" viewBox="0 0 22 22"><rect x="1" y="3" width="21" height="17" fill="#e2e2e2"/><path d="M11.5 3V20M1 11.5H22" stroke="#f6f6f6" stroke-width="1.2"/><rect x="1.8" y="3.8" width="9" height="7.5" fill="#e8e8e8" stroke="#383838" stroke-width="1.8"/></svg>
<svg class="b" style="left:4px;top:115px" width="24" height="24" viewBox="0 0 24 24"><path d="M12 3V21M3 12H21" stroke="#222" stroke-width="1.8"/><rect x="8.5" y="8.5" width="7" height="7" fill="#fff" stroke="#a01818" stroke-width="2"/></svg>
<svg class="b" style="left:26px;top:132px" width="6" height="6" viewBox="0 0 6 6"><path d="M6 0 L6 6 L0 6 Z" fill="#000"/></svg>
<svg class="b" style="left:4px;top:143px" width="24" height="24" viewBox="0 0 24 24"><path d="M5 5L19 19M19 5L5 19" stroke="#333" stroke-width="1.4"/><path d="M3 7L7 3M17 3L21 7M3 17L7 21M17 21L21 17" stroke="#333" stroke-width="1.2"/><circle cx="12" cy="12" r="2.8" fill="#c04848"/></svg>
<svg class="b" style="left:26px;top:160px" width="6" height="6" viewBox="0 0 6 6"><path d="M6 0 L6 6 L0 6 Z" fill="#000"/></svg>
<svg class="b" style="left:4px;top:170px" width="24" height="24" viewBox="0 0 24 24"><path d="M6 18L18 6" stroke="#222" stroke-width="1.6"/><circle cx="6" cy="18" r="2.6" fill="#c04848"/><circle cx="18" cy="6" r="2.6" fill="#c04848"/></svg>
<svg class="b" style="left:26px;top:187px" width="6" height="6" viewBox="0 0 6 6"><path d="M6 0 L6 6 L0 6 Z" fill="#000"/></svg>
<svg class="b" style="left:4px;top:198px" width="24" height="24" viewBox="0 0 24 24"><circle cx="12" cy="12" r="9" fill="#dce8f2" stroke="#222" stroke-width="1.8"/><circle cx="5.5" cy="5.5" r="2.5" fill="#c04848"/><circle cx="18" cy="5.5" r="2.5" fill="#c04848"/><circle cx="5.5" cy="18" r="2.5" fill="#c04848"/></svg>
<svg class="b" style="left:26px;top:215px" width="6" height="6" viewBox="0 0 6 6"><path d="M6 0 L6 6 L0 6 Z" fill="#000"/></svg>
<svg class="b" style="left:4px;top:226px" width="24" height="24" viewBox="0 0 24 24"><path d="M7 20 Q5 18 5 14 Q5 6 12 4.5 Q16 4 19 6" fill="none" stroke="#222" stroke-width="1.8"/><path d="M7 18 Q6 8 13 6.5 Q17 6 18 8 Q15 15 7 18Z" fill="#dce6f0"/><circle cx="6.5" cy="7" r="2.4" fill="#b04040"/><circle cx="18.5" cy="6.5" r="2.4" fill="#b04040"/><circle cx="7" cy="19.5" r="2.4" fill="#b04040"/></svg>
<svg class="b" style="left:26px;top:243px" width="6" height="6" viewBox="0 0 6 6"><path d="M6 0 L6 6 L0 6 Z" fill="#000"/></svg>
<svg class="b" style="left:4px;top:254px" width="24" height="24" viewBox="0 0 24 24"><rect x="4" y="6" width="16" height="12" fill="#d4e2ec" stroke="#222" stroke-width="1.8"/><circle cx="19.5" cy="5.5" r="2.3" fill="#c04848"/><circle cx="4.5" cy="18.5" r="2.3" fill="#c04848"/></svg>
<svg class="b" style="left:26px;top:271px" width="6" height="6" viewBox="0 0 6 6"><path d="M6 0 L6 6 L0 6 Z" fill="#000"/></svg>
<svg class="b" style="left:4px;top:281px" width="24" height="24" viewBox="0 0 24 24"><path d="M10 15 L19 3" stroke="#e0a820" stroke-width="3.5"/><path d="M9 16 L10.5 13.5 L12 15Z" fill="#333"/><text x="1" y="22" font-family="Liberation Sans" font-weight="bold" font-size="9" fill="#2a4a7a">abc</text></svg>
<svg class="b" style="left:26px;top:298px" width="6" height="6" viewBox="0 0 6 6"><path d="M6 0 L6 6 L0 6 Z" fill="#000"/></svg>
<svg class="b" style="left:4px;top:309px" width="24" height="24" viewBox="0 0 24 24"><path d="M10 15 L19 3" stroke="#e0a820" stroke-width="3.5"/><circle cx="6" cy="17" r="3.8" fill="#6050d0"/><path d="M3 17 L9 17 M6 14 L6 20" stroke="#e040a0" stroke-width="2"/></svg>
<svg class="b" style="left:26px;top:326px" width="6" height="6" viewBox="0 0 6 6"><path d="M6 0 L6 6 L0 6 Z" fill="#000"/></svg>
<svg class="b" style="left:4px;top:336px" width="24" height="24" viewBox="0 0 24 24"><path d="M4 4V10M1 7H7" stroke="#a01818" stroke-width="1.8"/><path d="M5 20 L11 13" stroke="#555" stroke-width="1.6" stroke-dasharray="2 1"/><path d="M4 21 L5 17 L8 20Z" fill="#555"/><rect x="12" y="9" width="9" height="7" fill="#e8eef2" stroke="#222" stroke-width="1.5"/></svg>
<svg class="b" style="left:26px;top:353px" width="6" height="6" viewBox="0 0 6 6"><path d="M6 0 L6 6 L0 6 Z" fill="#000"/></svg>
<svg class="b" style="left:4px;top:364px" width="24" height="24" viewBox="0 0 24 24"><path d="M3 19 L21 5" stroke="#222" stroke-width="0"/><path d="M4 16 L9 22M15 3 L21 9" stroke="#222" stroke-width="1.6"/><path d="M7 18 L18 7" stroke="#c03030" stroke-width="1.4"/><path d="M7 18 l1 -4 l3 3z M18 7 l-1 4 l-3 -3z" fill="#c03030"/></svg>
<svg class="b" style="left:26px;top:381px" width="6" height="6" viewBox="0 0 6 6"><path d="M6 0 L6 6 L0 6 Z" fill="#000"/></svg>
<svg class="b" style="left:4px;top:391px" width="24" height="24" viewBox="0 0 24 24"><rect x="3" y="4" width="18" height="16" fill="#f4e8e8" stroke="#222" stroke-width="1.8"/><path d="M3 9H21M3 13H21M3 17H21M9 9V20M15 9V20" stroke="#a02030" stroke-width="1.5"/></svg>
<svg class="b" style="left:26px;top:408px" width="6" height="6" viewBox="0 0 6 6"><path d="M6 0 L6 6 L0 6 Z" fill="#000"/></svg>
<svg class="b" style="left:4px;top:419px" width="24" height="24" viewBox="0 0 24 24"><rect x="3" y="3" width="17" height="16" fill="#e8eef4" stroke="#222" stroke-width="1.8"/><rect x="7" y="7" width="9" height="6" fill="none" stroke="#2830a0" stroke-width="1.8"/><path d="M18 14V22M14 18H22" stroke="#c02040" stroke-width="2.4"/><path d="M18 15V21M15 18H21" stroke="#5aa0e0" stroke-width="1"/></svg>
<svg class="b" style="left:26px;top:436px" width="6" height="6" viewBox="0 0 6 6"><path d="M6 0 L6 6 L0 6 Z" fill="#000"/></svg>
<svg class="b" style="left:4px;top:446px" width="24" height="24" viewBox="0 0 24 24"><path d="M4 4 H19 V14 L14 19 H4 Z" fill="#dce8f2" stroke="#a02020" stroke-width="1.8"/></svg>
<svg class="b" style="left:26px;top:463px" width="6" height="6" viewBox="0 0 6 6"><path d="M6 0 L6 6 L0 6 Z" fill="#000"/></svg>
<svg class="b" style="left:4px;top:474px" width="24" height="24" viewBox="0 0 24 24"><path d="M7 2V10M3 6H11" stroke="#a01818" stroke-width="2"/><circle cx="7" cy="6" r="2" fill="#3060c0"/><rect x="10" y="11" width="11" height="9" fill="#60b050" stroke="#8080c0" stroke-width="1.4"/><path d="M11 19 L15 14 L18 17 L20 15 V19Z" fill="#30a040"/></svg>
<svg class="b" style="left:26px;top:491px" width="6" height="6" viewBox="0 0 6 6"><path d="M6 0 L6 6 L0 6 Z" fill="#000"/></svg>
<svg class="b" style="left:4px;top:501px" width="24" height="24" viewBox="0 0 24 24"><path d="M12 2 L16 7 H13.5 V10.5 H17 V8 L22 12 L17 16 V13.5 H13.5 V17 H16 L12 22 L8 17 H10.5 V13.5 H7 V16 L2 12 L7 8 V10.5 H10.5 V7 H8 Z" fill="#8a1a8a" stroke="#7a1010" stroke-width="0.6"/></svg>
<svg class="b" style="left:26px;top:518px" width="6" height="6" viewBox="0 0 6 6"><path d="M6 0 L6 6 L0 6 Z" fill="#000"/></svg>
<svg class="b" style="left:4px;top:529px" width="24" height="24" viewBox="0 0 24 24"><path d="M14 2V10M10 6H18" stroke="#a01818" stroke-width="1.8"/><path d="M4 18 L13 9" stroke="#444" stroke-width="1.2" stroke-dasharray="1.5 1.5"/><path d="M3 19H19" stroke="#222" stroke-width="2"/><circle cx="18" cy="19" r="2.3" fill="#c04848"/></svg>
<svg class="b" style="left:26px;top:546px" width="6" height="6" viewBox="0 0 6 6"><path d="M6 0 L6 6 L0 6 Z" fill="#000"/></svg>
<svg class="b" style="left:4px;top:556px" width="24" height="24" viewBox="0 0 24 24"><path d="M5 17L18 4" stroke="#222" stroke-width="1.6"/><circle cx="5" cy="17" r="2.5" fill="#c04848"/><circle cx="18" cy="4" r="2.5" fill="#c04848"/><rect x="7" y="18" width="3.5" height="3" fill="#2080f0"/><rect x="10.5" y="18" width="3.5" height="3" fill="#9030c0"/><rect x="14" y="18" width="3.5" height="3" fill="#f06040"/><rect x="17.5" y="18" width="3.5" height="3" fill="#40d040"/></svg>
<svg class="b" style="left:26px;top:573px" width="6" height="6" viewBox="0 0 6 6"><path d="M6 0 L6 6 L0 6 Z" fill="#000"/></svg>
<svg class="b" style="left:4px;top:584px" width="24" height="24" viewBox="0 0 24 24"><path d="M4 5 H20 V14 L12 21 L4 14 Z" fill="#d0e0ea" stroke="#222" stroke-width="1.8"/><circle cx="4" cy="5" r="2.2" fill="#a02020"/><circle cx="20" cy="5" r="2.2" fill="#a02020"/><circle cx="4" cy="15" r="2.2" fill="#a02020"/><circle cx="20" cy="15" r="2.2" fill="#a02020"/><circle cx="12" cy="21" r="2.2" fill="#a02020"/></svg>
<svg class="b" style="left:26px;top:601px" width="6" height="6" viewBox="0 0 6 6"><path d="M6 0 L6 6 L0 6 Z" fill="#000"/></svg>
<svg class="b" style="left:4px;top:611px" width="24" height="24" viewBox="0 0 24 24"><path d="M3 3L12 12M12 3L3 12" stroke="#c03040" stroke-width="1.6"/><path d="M12 12L19 19" stroke="#c03040" stroke-width="1.2" stroke-dasharray="2 1.5"/><circle cx="19" cy="19" r="2.3" fill="#c04848"/></svg>
<svg class="b" style="left:26px;top:628px" width="6" height="6" viewBox="0 0 6 6"><path d="M6 0 L6 6 L0 6 Z" fill="#000"/></svg>
<svg class="b" style="left:4px;top:653px" width="24" height="24" viewBox="0 0 24 24"><path d="M2 16 Q5 10 8 16 Q11 22 14 16 Q17 12 21 18" stroke="#222" stroke-width="1.6" fill="none"/><path d="M9 14 L18 2" stroke="#e0a820" stroke-width="3.5"/><path d="M18 2 l2 1.5" stroke="#e07080" stroke-width="3"/></svg>
<svg class="b" style="left:26px;top:670px" width="6" height="6" viewBox="0 0 6 6"><path d="M6 0 L6 6 L0 6 Z" fill="#000"/></svg>
<svg class="b" style="left:4px;top:680px" width="24" height="24" viewBox="0 0 24 24"><rect x="3" y="4" width="18" height="15" fill="#f0f0f0" stroke="#c07050" stroke-width="1.8"/><path d="M10 7H14M12 7V16M10 16H14" stroke="#a03010" stroke-width="2.5"/></svg>
<svg class="b" style="left:26px;top:697px" width="6" height="6" viewBox="0 0 6 6"><path d="M6 0 L6 6 L0 6 Z" fill="#000"/></svg>
<svg class="b" style="left:4px;top:708px" width="24" height="24" viewBox="0 0 24 24"><path d="M5 4 V9 L9 6.5Z" fill="none" stroke="#222" stroke-width="1.4"/><path d="M5 9 L2 19M7 9 L10 19" stroke="#222" stroke-width="1.6"/><circle cx="18" cy="6" r="2.8" fill="#fff" stroke="#2a8ad8" stroke-width="1.6"/><path d="M18 9V19" stroke="#222" stroke-width="2"/><path d="M2 21H22" stroke="#c07050" stroke-width="1.6"/></svg>
<svg class="b" style="left:26px;top:725px" width="6" height="6" viewBox="0 0 6 6"><path d="M6 0 L6 6 L0 6 Z" fill="#000"/></svg>
<svg class="b" style="left:4px;top:735px" width="24" height="24" viewBox="0 0 24 24"><rect x="3" y="4" width="17" height="17" fill="#eef2f6" stroke="#a02020" stroke-width="1.8"/><rect x="3" y="4" width="17" height="3" fill="#2a3a90"/><path d="M6 10H13M6 13H13M6 16H13" stroke="#6080b0" stroke-width="1"/><path d="M11 17 L19 5" stroke="#e0a820" stroke-width="3.5"/><path d="M19 5 l1.5 -2" stroke="#e07080" stroke-width="3"/></svg>
<svg class="b" style="left:26px;top:752px" width="6" height="6" viewBox="0 0 6 6"><path d="M6 0 L6 6 L0 6 Z" fill="#000"/></svg>
<svg class="b" style="left:4px;top:764px" width="24" height="24" viewBox="0 0 24 24"><rect x="3" y="8" width="18" height="9" fill="#dbe6f2" stroke="#a02020" stroke-width="1.8"/><path d="M3 11 Q12 8 21 11M3 14 Q12 11 21 14" stroke="#4a7ad8" stroke-width="1.2" fill="none"/><path d="M12 2V22" stroke="#111" stroke-width="1.8"/></svg>
<svg class="b" style="left:26px;top:781px" width="6" height="6" viewBox="0 0 6 6"><path d="M6 0 L6 6 L0 6 Z" fill="#000"/></svg>
<svg class="b" style="left:4px;top:791px" width="24" height="24" viewBox="0 0 24 24"><path d="M2 18 Q6 13 10 17 Q14 21 21 16" stroke="#8a3a50" stroke-width="1.6" fill="none"/><path d="M9 15 L18 2" stroke="#e0a820" stroke-width="3.5"/><path d="M18 2 l2 1.5" stroke="#e07080" stroke-width="3"/></svg>
<svg class="b" style="left:26px;top:808px" width="6" height="6" viewBox="0 0 6 6"><path d="M6 0 L6 6 L0 6 Z" fill="#000"/></svg>
<svg class="b" style="left:4px;top:818px" width="24" height="24" viewBox="0 0 24 24"><path d="M3 19 L10 9 H22" stroke="#111" stroke-width="2" fill="none"/><path d="M9 15 H20" stroke="#111" stroke-width="1.8"/></svg>
<svg class="b" style="left:26px;top:835px" width="6" height="6" viewBox="0 0 6 6"><path d="M6 0 L6 6 L0 6 Z" fill="#000"/></svg>
<svg class="b" style="left:4px;top:846px" width="24" height="24" viewBox="0 0 24 24"><path d="M2 9H22M2 16H22" stroke="#a02030" stroke-width="2.4"/><path d="M5 12.5h2M10 12.5h2M15 12.5h2" stroke="#2040a0" stroke-width="2"/><path d="M6 8V17M12 8V17M18 8V17" stroke="#a02030" stroke-width="0.8"/></svg>
<svg class="b" style="left:26px;top:863px" width="6" height="6" viewBox="0 0 6 6"><path d="M6 0 L6 6 L0 6 Z" fill="#000"/></svg>
<svg class="b" style="left:4px;top:873px" width="24" height="24" viewBox="0 0 24 24"><path d="M4 5 H14 V8 H10 V14 H14 V17 H4 V14 H8 V8 H4Z" fill="#a8a8d8" stroke="#7070a0" stroke-width="0.8"/><path d="M11 17 L20 5" stroke="#e0a820" stroke-width="3.5"/><path d="M20 5 l1.5 -2" stroke="#333" stroke-width="2"/></svg>
<svg class="b" style="left:26px;top:890px" width="6" height="6" viewBox="0 0 6 6"><path d="M6 0 L6 6 L0 6 Z" fill="#000"/></svg>
<svg class="b" style="left:4px;top:900px" width="24" height="24" viewBox="0 0 24 24"><rect x="5.5" y="4" width="5" height="18" fill="#cfe2ea"/><rect x="3.5" y="4" width="2.2" height="18" fill="#3050d0"/><path d="M3.5 9 L7.5 14 L3.5 19Z" fill="#e01818"/><path d="M10.5 3 V10.5 Q10.5 12 12.5 12 H22" stroke="#111" stroke-width="1.8" fill="none"/><path d="M11 16.5 H14 M16 16.5 H19" stroke="#777" stroke-width="1.2"/><path d="M10.5 21 H25" stroke="#111" stroke-width="1.8"/></svg>
<svg class="b" style="left:26px;top:917px" width="6" height="6" viewBox="0 0 6 6"><path d="M6 0 L6 6 L0 6 Z" fill="#000"/></svg>
<svg class="b" style="left:4px;top:928px" width="24" height="24" viewBox="0 0 24 24"><g fill="#f0c840"><rect x="2.5" y="2" width="3" height="3"/><rect x="6.5" y="2" width="3" height="3"/><rect x="2.5" y="6" width="3" height="3"/><rect x="6.5" y="6" width="3" height="3"/></g><path d="M7.5 20 L11 11.5 Q12 9 14.5 8.6 L18.5 8.3 Q20.2 8.4 20.2 10 V20 Z" fill="#bcd2da" stroke="#505050" stroke-width="1.9" stroke-linejoin="round"/><path d="M10.5 18 L18 10.5 M12.5 12 L18 18" stroke="#f4f8fa" stroke-width="1.2"/><path d="M10.5 18 L18 10.5" stroke="#777" stroke-width="0.6"/></svg>
<svg class="b" style="left:26px;top:945px" width="6" height="6" viewBox="0 0 6 6"><path d="M6 0 L6 6 L0 6 Z" fill="#000"/></svg>
<svg class="b" style="left:4px;top:955px" width="24" height="24" viewBox="0 0 24 24"><rect x="3.5" y="7.5" width="3" height="3" rx="1" fill="#e82090"/><rect x="3.5" y="12" width="3" height="3" rx="1" fill="#10a0a0"/><rect x="3.5" y="16" width="3" height="3" rx="1" fill="#f08040"/><path d="M7.5 20 L11 11.5 Q12 9 14.5 8.6 L18.5 8.3 Q20.2 8.4 20.2 10 V20 Z" fill="#bcd2da" stroke="#505050" stroke-width="1.9" stroke-linejoin="round"/><path d="M10.5 18 L18 10.5 M12.5 12 L18 18" stroke="#f4f8fa" stroke-width="1.2"/><path d="M10.5 18 L18 10.5" stroke="#777" stroke-width="0.6"/></svg>
<svg class="b" style="left:26px;top:972px" width="6" height="6" viewBox="0 0 6 6"><path d="M6 0 L6 6 L0 6 Z" fill="#000"/></svg>
<svg class="b" style="left:6px;top:642px" width="24" height="4" viewBox="0 0 24 4"><rect x="0" y="0" width="1.2" height="4" fill="#a4a4a4"/><rect x="3" y="0" width="1.2" height="4" fill="#a4a4a4"/><rect x="6" y="0" width="1.2" height="4" fill="#a4a4a4"/><rect x="9" y="0" width="1.2" height="4" fill="#a4a4a4"/><rect x="12" y="0" width="1.2" height="4" fill="#a4a4a4"/><rect x="15" y="0" width="1.2" height="4" fill="#a4a4a4"/><rect x="18" y="0" width="1.2" height="4" fill="#a4a4a4"/><rect x="21" y="0" width="1.2" height="4" fill="#a4a4a4"/></svg>
<div class="b" style="left:45px;top:149px;width:427px;height:518px;background:#f0f0f0;border:1px solid #9c9c9c;box-sizing:border-box;box-shadow:1px 2px 7px rgba(0,0,0,0.35)"></div>
<div class="b" style="left:46px;top:150px;width:425px;height:38px;background:#ffffff"></div>
<svg class="b" style="left:57px;top:157px" width="18" height="22" viewBox="0 0 18 22"><path d="M1.7 5.8 L9 1.5 L16.7 6 L9 10Z" fill="#5a9070"/><path d="M1.7 5.8 L9 10 V20 L1.7 15.5Z" fill="#fff"/><path d="M9 10 L16.7 6 V16 L9 20Z" fill="#2e5a44"/><text x="1.8" y="16" font-family="Liberation Sans" font-size="7" font-weight="bold" fill="#e03050" transform="rotate(15 5 13)">12</text><path d="M11 16 L12 13 L13 15 L14.5 11" stroke="#fff" stroke-width="1" fill="none"/></svg>
<span class="t" style="left:81.0px;top:160.3px;font-size:16.5px;color:#9a9a9a;font-weight:normal;transform:scaleX(0.893);transform-origin:0 0;-webkit-text-stroke:0">Tin: Contour, Smooth and Label</span>
<div class="b" style="left:318px;top:168px;width:12px;height:1px;background:#6a6a6a"></div>
<div class="b" style="left:376px;top:163px;width:12px;height:12px;border:1px solid #dadada;box-sizing:border-box"></div>
<svg class="b" style="left:435px;top:163px" width="12" height="12" viewBox="0 0 12 12"><path d="M0.5 0.5 L11.5 11.5 M11.5 0.5 L0.5 11.5" stroke="#555" stroke-width="1.1"/></svg>
<span class="t" style="left:51.0px;top:195.5px;font-size:15px;color:#1a1a22;font-weight:normal;">Function name</span>
<span class="t" style="left:51.2px;top:223.7px;font-size:15px;color:#1a1a22;font-weight:normal;letter-spacing:0.25px">Tin to contour</span>
<div class="b" style="left:191px;top:194px;width:241px;height:23px;background:#fff;border-top:2px solid #787878;border-left:2px solid #787878;border-right:1px solid #e8e8e8;border-bottom:1px solid #e8e8e8;box-sizing:border-box"></div>
<span class="t" style="left:195.5px;top:198.8px;font-size:15px;color:#1a1a22;font-weight:normal;">Contour survey tin</span>
<div class="b" style="left:191px;top:223px;width:241px;height:22px;background:#fff;border-top:2px solid #787878;border-left:2px solid #787878;border-right:1px solid #e8e8e8;border-bottom:1px solid #e8e8e8;box-sizing:border-box"></div>
<span class="t" style="left:195.0px;top:226.8px;font-size:15px;color:#1a1a22;font-weight:normal;letter-spacing:-0.45px">survey</span>
<div class="b" style="left:437px;top:193px;width:30px;height:26px;background:#eceae2;border-top:1px solid #fcfcfc;border-left:1px solid #fcfcfc;border-right:2px solid #7a7a7a;border-bottom:2px solid #7a7a7a;box-sizing:border-box"></div>
<svg class="b" style="left:443px;top:197px" width="18" height="18" viewBox="0 0 18 18"><text x="2" y="14" font-family="Liberation Serif" font-style="italic" font-weight="bold" font-size="15" fill="#a01010">f</text><text x="8" y="15" font-family="Liberation Sans" font-style="italic" font-weight="bold" font-size="9" fill="#8a20b0">x</text></svg>
<div class="b" style="left:437px;top:222px;width:30px;height:25px;background:#eceae2;border-top:1px solid #fcfcfc;border-left:1px solid #fcfcfc;border-right:2px solid #7a7a7a;border-bottom:2px solid #7a7a7a;box-sizing:border-box"></div>
<svg class="b" style="left:443px;top:226px" width="18" height="17" viewBox="0 0 18 17"><path d="M6 2.5 H16 V15 H2.5 V6Z" fill="#cfe0ea" stroke="#4a4a4a" stroke-width="1.8" stroke-linejoin="round"/><path d="M3 14.5 L15.5 3 M6 3 L9 9 L15.5 14.5" stroke="#666" stroke-width="1"/></svg>
<div class="b" style="left:51px;top:278px;width:416px;height:309px;background:#f0f0f0;border-top:1px solid #fff;border-left:1px solid #fff;border-right:2px solid #707070;border-bottom:2px solid #707070;box-sizing:border-box"></div>
<div class="b" style="left:55px;top:254px;width:76px;height:25px;background:#f0f0f0;border-top:1px solid #fff;border-left:1px solid #fff;border-right:2px solid #707070;box-sizing:border-box"></div>
<div class="b" style="left:131px;top:254px;width:116px;height:25px;background:#f0f0f0;border-top:1px solid #fff;border-right:2px solid #707070;box-sizing:border-box"></div>
<div class="b" style="left:311px;top:254px;width:58px;height:25px;background:#f0f0f0;border-top:1px solid #fff;border-right:2px solid #707070;box-sizing:border-box"></div>
<div class="b" style="left:245px;top:251px;width:66.5px;height:29px;background:#f0f0f0;border-top:1px solid #fff;border-left:1px solid #fff;border-right:2px solid #707070;box-sizing:border-box"></div>
<span class="t" style="left:61.0px;top:259.1px;font-size:15px;color:#1a1a22;font-weight:normal;">Contours</span>
<span class="t" style="left:137.5px;top:259.1px;font-size:15px;color:#1a1a22;font-weight:normal;">Major Contours</span>
<span class="t" style="left:255.5px;top:256.3px;font-size:15px;color:#1a1a22;font-weight:normal;letter-spacing:-0.4px">Range</span>
<span class="t" style="left:315.5px;top:258.3px;font-size:15px;color:#1a1a22;font-weight:normal;letter-spacing:-0.6px">Labels</span>
<span class="t" style="left:61.0px;top:287.8px;font-size:15px;color:#a8a8a8;font-weight:normal;letter-spacing:0.35px">Contour minimum</span>
<span class="t" style="left:61.0px;top:316.5px;font-size:15px;color:#a8a8a8;font-weight:normal;letter-spacing:0.35px">Contour maximum</span>
<span class="t" style="left:61.0px;top:345.3px;font-size:15px;color:#1a1a22;font-weight:normal;">Contour reference</span>
<div class="b" style="left:202px;top:288px;width:220px;height:21px;background:#fff;border-top:2px solid #787878;border-left:2px solid #787878;border-right:1px solid #e8e8e8;border-bottom:1px solid #e8e8e8;box-sizing:border-box"></div>
<div class="b" style="left:202px;top:316px;width:220px;height:21px;background:#fff;border-top:2px solid #787878;border-left:2px solid #787878;border-right:1px solid #e8e8e8;border-bottom:1px solid #e8e8e8;box-sizing:border-box"></div>
<div class="b" style="left:202px;top:345px;width:220px;height:21px;background:#fff;border-top:2px solid #787878;border-left:2px solid #787878;border-right:1px solid #e8e8e8;border-bottom:1px solid #e8e8e8;box-sizing:border-box"></div>
<span class="t" style="left:204.0px;top:348.8px;font-size:15px;color:#1a1a22;font-weight:normal;">0</span>
<div class="b" style="left:428px;top:286px;width:29px;height:26px;background:#eceae2;border-top:1px solid #fcfcfc;border-left:1px solid #fcfcfc;border-right:2px solid #7a7a7a;border-bottom:2px solid #7a7a7a;box-sizing:border-box"></div>
<svg class="b" style="left:431px;top:289px" width="22" height="20" viewBox="0 0 22 20"><path d="M8 3 V14 H16" stroke="#2a6ab8" stroke-width="2.2" fill="none"/><path d="M3 17 L8 11 V17Z M3 17 H11" stroke="#2a6ab8" stroke-width="1.8" fill="none"/><path d="M11 7 V10 H14" stroke="#111" stroke-width="1.3" fill="none"/><rect x="17" y="1" width="4" height="18" fill="#f0c040"/><path d="M17.5 4h2M17.5 7h2M17.5 10h2M17.5 13h2M17.5 16h2" stroke="#a07010" stroke-width="0.8"/></svg>
<div class="b" style="left:428px;top:315px;width:29px;height:26px;background:#eceae2;border-top:1px solid #fcfcfc;border-left:1px solid #fcfcfc;border-right:2px solid #7a7a7a;border-bottom:2px solid #7a7a7a;box-sizing:border-box"></div>
<svg class="b" style="left:431px;top:318px" width="22" height="20" viewBox="0 0 22 20"><path d="M8 3 V14 H16" stroke="#2a6ab8" stroke-width="2.2" fill="none"/><path d="M3 17 L8 11 V17Z M3 17 H11" stroke="#2a6ab8" stroke-width="1.8" fill="none"/><path d="M11 7 V10 H14" stroke="#111" stroke-width="1.3" fill="none"/><rect x="17" y="1" width="4" height="18" fill="#f0c040"/><path d="M17.5 4h2M17.5 7h2M17.5 10h2M17.5 13h2M17.5 16h2" stroke="#a07010" stroke-width="0.8"/></svg>
<div class="b" style="left:428px;top:343px;width:29px;height:26px;background:#eceae2;border-top:1px solid #fcfcfc;border-left:1px solid #fcfcfc;border-right:2px solid #7a7a7a;border-bottom:2px solid #7a7a7a;box-sizing:border-box"></div>
<svg class="b" style="left:431px;top:346px" width="22" height="20" viewBox="0 0 22 20"><path d="M8 3 V14 H16" stroke="#2a6ab8" stroke-width="2.2" fill="none"/><path d="M3 17 L8 11 V17Z M3 17 H11" stroke="#2a6ab8" stroke-width="1.8" fill="none"/><path d="M11 7 V10 H14" stroke="#111" stroke-width="1.3" fill="none"/><rect x="17" y="1" width="4" height="18" fill="#f0c040"/><path d="M17.5 4h2M17.5 7h2M17.5 10h2M17.5 13h2M17.5 16h2" stroke="#a07010" stroke-width="0.8"/></svg>
<div class="b" style="left:64px;top:381px;width:403px;height:112px;border-top:1px solid #b4b4b4;border-left:1px solid #b4b4b4;border-bottom:1px solid #b4b4b4;box-shadow:inset 1px 1px 0 #fff, 0 1px 0 #fff;box-sizing:border-box"></div>
<div class="b" style="left:73px;top:376px;width:140px;height:14px;background:#f0f0f0"></div>
<span class="t" style="left:79.0px;top:376.0px;font-size:15px;color:#1a1a22;font-weight:normal;">Colour by range</span>
<div class="b" style="left:197px;top:377px;width:15px;height:15px;background:#fff;border-top:2px solid #7a7a7a;border-left:2px solid #7a7a7a;border-right:1px solid #f4f4f4;border-bottom:1px solid #f4f4f4;box-sizing:border-box"></div>
<svg class="b" style="left:200px;top:380px" width="11" height="10" viewBox="0 0 11 10"><path d="M1.5 4.5 L4.3 8 L9.5 1.5" stroke="#000" stroke-width="2.6" fill="none"/></svg>
<span class="t" style="left:79.0px;top:409.1px;font-size:15px;color:#1a1a22;font-weight:normal;">Height range file</span>
<span class="t" style="left:81.0px;top:439.9px;font-size:15px;color:#1a1a22;font-weight:normal;">Interpolate colours</span>
<span class="t" style="left:81.0px;top:468.6px;font-size:15px;color:#1a1a22;font-weight:normal;letter-spacing:-0.17px">Colour text labels</span>
<div class="b" style="left:218px;top:408px;width:187px;height:22px;background:#fff;border-top:2px solid #787878;border-left:2px solid #787878;border-right:1px solid #e8e8e8;border-bottom:1px solid #e8e8e8;box-sizing:border-box"></div>
<span class="t" style="left:222.0px;top:412.8px;font-size:15px;color:#1a1a22;font-weight:normal;letter-spacing:-0.25px">_Heights_at_1m_interval.hrf</span>
<div class="b" style="left:410px;top:407px;width:31px;height:26px;background:#efeee8;border:1px solid #555;border-bottom:2px solid #555;border-right:2px solid #777;box-sizing:border-box"></div>
<svg class="b" style="left:415px;top:410px" width="19" height="17" viewBox="0 0 19 17"><path d="M1.5 3.5 Q1.5 1.5 3.5 1.5 H7 L9 3.5 H15.5 Q17 3.5 17 5 V14 Q17 15.5 15.5 15.5 H3.5 Q1.5 15.5 1.5 13.5Z" fill="#e0b030" stroke="#c09020" stroke-width="1.2"/><path d="M2.5 15 L4.5 8 Q5 7 6.5 7 H17.5 Q18.5 7 18 8.5 L16 15Z" fill="#f4e070" stroke="#c09020" stroke-width="1"/></svg>
<div class="b" style="left:424px;top:441px;width:16px;height:15px;background:#f8f8f8;border-top:2px solid #7a7a7a;border-left:2px solid #7a7a7a;box-sizing:border-box"></div>
<div class="b" style="left:424px;top:470px;width:16px;height:15px;background:#fff;border-top:2px solid #7a7a7a;border-left:2px solid #7a7a7a;box-sizing:border-box"></div>
<svg class="b" style="left:427px;top:473px" width="11" height="10" viewBox="0 0 11 10"><path d="M1.5 4.5 L4.3 8 L9.5 1.5" stroke="#000" stroke-width="2.6" fill="none"/></svg>
<div class="b" style="left:52px;top:591px;width:415px;height:22px;background:#f0f0f0;border-top:2px solid #787878;border-left:2px solid #787878;border-right:1px solid #e8e8e8;border-bottom:1px solid #e8e8e8;box-sizing:border-box"></div>
<span class="t" style="left:60.0px;top:595.2px;font-size:15px;color:#1a1a22;font-weight:normal;letter-spacing:-0.35px">Finished</span>
<div class="b" style="left:104px;top:620px;width:65px;height:27px;background:#efefef;border-top:1px solid #fcfcfc;border-left:1px solid #fcfcfc;border-right:2px solid #7a7a7a;border-bottom:2px solid #7a7a7a;box-sizing:border-box"></div>
<span class="t" style="left:111.5px;top:625.0px;font-size:15px;color:#1a1a22;font-weight:normal;letter-spacing:-0.6px">Process</span>
<div class="b" style="left:223px;top:620px;width:66px;height:27px;background:#efefef;border-top:1px solid #fcfcfc;border-left:1px solid #fcfcfc;border-right:2px solid #7a7a7a;border-bottom:2px solid #7a7a7a;box-sizing:border-box"></div>
<span class="t" style="left:236.0px;top:625.0px;font-size:15px;color:#1a1a22;font-weight:normal;letter-spacing:-0.2px">Finish</span>
<div class="b" style="left:343px;top:620px;width:65px;height:27px;background:#efefef;border-top:1px solid #fcfcfc;border-left:1px solid #fcfcfc;border-right:2px solid #7a7a7a;border-bottom:2px solid #7a7a7a;box-sizing:border-box"></div>
<span class="t" style="left:359.5px;top:625.0px;font-size:15px;color:#1a1a22;font-weight:normal;">Help</span>
<div class="b" style="left:435px;top:355px;width:251px;height:630px;background:#f0f0f0;box-shadow:2px 3px 9px rgba(0,0,0,0.38)"></div>
<div class="b" style="left:435px;top:355px;width:251px;height:39px;background:#7a7272"></div>
<span class="t" style="left:445.5px;top:367.3px;font-size:15px;color:#f4f0f0;font-weight:normal;letter-spacing:-0.35px">Folder *</span>
<div class="b" style="left:660px;top:365px;width:26px;height:25px;background:#c84a4a"></div>
<svg class="b" style="left:667px;top:372px" width="12" height="12" viewBox="0 0 12 12"><path d="M2.3 2.8 L8.7 9.2 M8.7 2.8 L2.3 9.2" stroke="#fff" stroke-width="1.5"/></svg>
<div class="b" style="left:440px;top:405px;width:246px;height:239px;border-top:1px solid #a8a8a8;border-left:1px solid #a8a8a8;border-bottom:1px solid #a8a8a8;box-shadow:inset 1px 1px 0 #fff;box-sizing:border-box"></div>
<div class="b" style="left:455px;top:413px;width:216px;height:189px;background:#fff;border-top:3px solid #6e6e6e;border-left:3px solid #6e6e6e;border-right:1px solid #a8a8a8;border-bottom:2px solid #a0a0a0;box-sizing:border-box"></div>
<div class="b" style="left:458px;top:579px;width:212px;height:20px;background:#f0f0f0"></div>
<div class="b" style="left:480px;top:580px;width:80px;height:19px;background:#cdcdcd"></div>
<svg class="b" style="left:462px;top:583px" width="10" height="12" viewBox="0 0 10 12"><path d="M7 1.5 L2.5 6 L7 10.5" stroke="#606060" stroke-width="1.8" fill="none"/></svg>
<svg class="b" style="left:654px;top:583px" width="10" height="12" viewBox="0 0 10 12"><path d="M3 1.5 L7.5 6 L3 10.5" stroke="#606060" stroke-width="1.8" fill="none"/></svg>
<div class="b" style="left:455px;top:605px;width:216px;height:26px;background:#efefef;border-top:1px solid #fcfcfc;border-left:1px solid #fcfcfc;border-right:2px solid #7a7a7a;border-bottom:2px solid #7a7a7a;box-sizing:border-box"></div>
<span class="t" style="left:543.5px;top:610.3px;font-size:15px;color:#1a1a22;font-weight:normal;letter-spacing:-0.6px">Select</span>
<div class="b" style="left:435px;top:644px;width:251px;height:341px;overflow:hidden">
<span class="t" style="left:2.5px;top:9.3px;font-size:15px;color:#1a1a22;letter-spacing:0.28px">[Lib]</span>
<span class="t" style="left:2.5px;top:30.5px;font-size:15px;color:#1a1a22;letter-spacing:-0.3px">[User Lib]</span>
<span class="t" style="left:2.5px;top:51.6px;font-size:15px;color:#1a1a22;letter-spacing:-0.29px">[Browse]</span>
<span class="t" style="left:2.5px;top:72.8px;font-size:15px;color:#1a1a22;letter-spacing:-0.34px">[Browse reset]</span>
<span class="t" style="left:2.5px;top:93.9px;font-size:15px;color:#1a1a22;letter-spacing:-0.33px">[Browse 12d Synergy]</span>
<span class="t" style="left:2.5px;top:115.1px;font-size:15px;color:#1a1a22;letter-spacing:-0.28px">[12d Synergy]</span>
<span class="t" style="left:2.5px;top:136.3px;font-size:15px;color:#1a1a22;letter-spacing:-0.17px">[Relative]</span>
<span class="t" style="left:2.5px;top:157.4px;font-size:15px;color:#1a1a22;letter-spacing:0.12px">[Open]</span>
<span class="t" style="left:2.5px;top:178.6px;font-size:15px;color:#1a1a22;letter-spacing:0.18px">[Open with]</span>
<span class="t" style="left:2.5px;top:199.7px;font-size:15px;color:#1a1a22;letter-spacing:0.02px">[Edit file]</span>
<span class="t" style="left:2.5px;top:220.9px;font-size:15px;color:#1a1a22;letter-spacing:0.15px">[Unicode format]</span>
<span class="t" style="left:2.5px;top:242.1px;font-size:15px;color:#1a1a22;letter-spacing:-0.06px">[Ansi format] (System codepage)</span>
<span class="t" style="left:2.5px;top:263.2px;font-size:15px;color:#1a1a22;letter-spacing:-0.13px">[UTF-8 format] (System codepage)</span>
<span class="t" style="left:2.5px;top:284.4px;font-size:15px;color:#1a1a22;letter-spacing:-0.35px">[Explore]</span>
<span class="t" style="left:2.5px;top:305.5px;font-size:15px;color:#1a1a22;letter-spacing:-0.1px">[Delete file]</span>
<span class="t" style="left:2.5px;top:326.7px;font-size:15px;color:#1a1a22;letter-spacing:-0.07px">[Email]</span>
</div>
<svg class="b" style="left:669px;top:655.0px" width="7" height="9" viewBox="0 0 7 9"><path d="M0 0 L6 4.5 L0 9Z" fill="#000"/></svg>
<svg class="b" style="left:669px;top:676.27px" width="7" height="9" viewBox="0 0 7 9"><path d="M0 0 L6 4.5 L0 9Z" fill="#000"/></svg>
<svg class="b" style="left:669px;top:761.35px" width="7" height="9" viewBox="0 0 7 9"><path d="M0 0 L6 4.5 L0 9Z" fill="#000"/></svg>
<div class="b" style="left:431px;top:794px;width:257px;height:29px;border:3px solid #4f58a8;box-sizing:border-box"></div>
<svg class="b" style="left:500px;top:806px" width="16" height="24" viewBox="0 0 16 24"><path d="M1 1 L1 17 L5 13 L8 20 L10.5 19 L7.5 12.5 L13 12.5 Z" fill="#fff" stroke="#111" stroke-width="1.1" stroke-linejoin="round"/></svg>
<svg class="b" style="left:420px;top:320px" width="360" height="100" viewBox="0 0 360 100"><path d="M61.5 5 H350.5 V33 H205 L9.5 90 L110.5 33 H61.5 Z" fill="#fff" stroke="#4f58a8" stroke-width="2.2" stroke-linejoin="miter"/></svg>
<span class="t" style="left:489.5px;top:330px;font-size:16px;color:#000;letter-spacing:0.16px">Pick the <b>&lt;Height Range File&gt;</b> button</span>
<svg class="b" style="left:170px;top:785px" width="270" height="80" viewBox="0 0 270 80"><path d="M7 9 H226.5 V18.5 L262 23.5 L226.5 37.5 V73 H7 Z" fill="#fff" stroke="#4f58a8" stroke-width="2.2"/></svg>
<div class="t" style="left:177px;top:796.7px;width:219px;text-align:center;font-size:16px;line-height:19.2px;color:#000;white-space:normal;letter-spacing:0.15px">Pick the <b>&lt;Open&gt;</b> option in<br>the list, this will open the<br>Height Range File in a panel</div>
</body></html>
